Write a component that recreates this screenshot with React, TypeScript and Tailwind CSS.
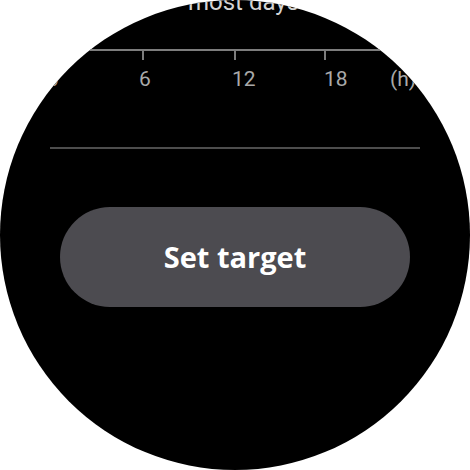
export default function App() {
  return (
    <div className="w-[470px] h-[470px] bg-white">
      <div
        className="w-[470px] h-[470px] rounded-full bg-black overflow-hidden flex flex-col"
        style={{ fontFamily: "Roboto, 'Open Sans', sans-serif" }}
      >
        {/* Chart axis */}
        <svg width="470" height="100" viewBox="0 0 470 100" className="shrink-0">
          <text x="188" y="10" fill="#d4d4d4" fontSize="24" fontFamily="Roboto, sans-serif">
            most days
          </text>
          <line x1="0" y1="50" x2="470" y2="50" stroke="#7d7d7d" strokeWidth="2" />
          {[52, 143, 235, 325, 416].map((x) => (
            <line key={x} x1={x} y1="50" x2={x} y2="60" stroke="#7d7d7d" strokeWidth="2" />
          ))}
          <g fill="#a9a9a9" fontSize="21" fontFamily="Roboto, sans-serif">
            <text x="47" y="86">0</text>
            <text x="139" y="86">6</text>
            <text x="232" y="86">12</text>
            <text x="324" y="86">18</text>
            <text x="390" y="86">(h)</text>
          </g>
        </svg>

        <div className="mt-[47px] mx-[50px] h-[2px] bg-[#4d4d4d]" />

        <button
          className="mt-[58px] mx-[60px] h-[100px] rounded-full bg-[#4c4b50] text-white text-[29px] font-bold"
          style={{ fontFamily: "'Open Sans', sans-serif" }}
        >
          Set target
        </button>
      </div>
    </div>
  );
}
